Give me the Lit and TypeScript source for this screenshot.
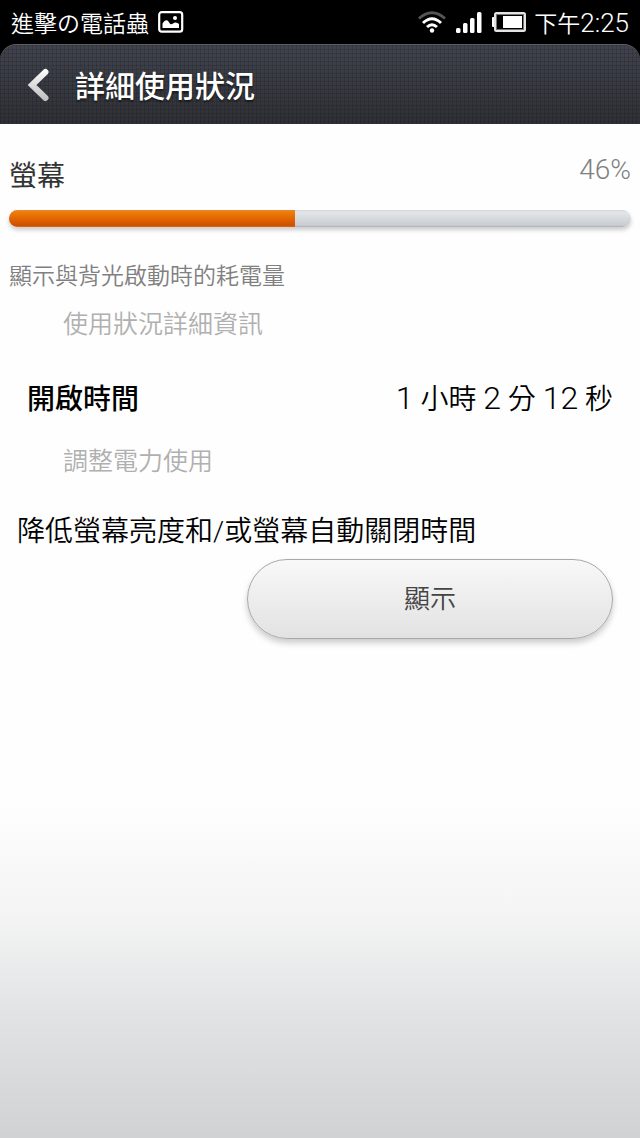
import { LitElement, html, css, svg } from "lit";
import { customElement, property } from "lit/decorators.js";

const pictureIcon = svg`
  <svg class="icon" width="26" height="22" viewBox="0 0 26 22" role="img" aria-label="圖片">
    <rect x="1.200" y="1.200" width="23" height="19.500" rx="2.500" fill="none" stroke="#fff" stroke-width="2.200"/>
    <path d="M4.500 17v-4.500c1.500-2 2.500-3.200 4-3.200 2.300 0 2.700 3.700 4.500 3.900 1.500.2 2.200-1.400 4-1.700 1.500-.2 3 .6 4 1.500V17z" fill="#fff"/>
    <circle cx="17" cy="7" r="2" fill="#fff"/>
  </svg>`;

const wifiIcon = svg`
  <svg class="icon" width="28" height="22" viewBox="0 0 28 22" role="img" aria-label="Wi-Fi">
    <g fill="none" stroke="#fff" stroke-width="3">
      <path d="M1 7.500Q14-4 27 7.500" stroke="#555"/>
      <path d="M5 12Q14 3.500 23 12"/>
      <path d="M9 16Q14 11.500 19 16"/>
    </g>
    <circle cx="14" cy="19.500" r="2.200" fill="#fff"/>
  </svg>`;

const signalIcon = svg`
  <svg class="icon" width="26" height="21" viewBox="0 0 26 21" role="img" aria-label="訊號">
    <g fill="#fff">
      <rect x="0" y="16" width="4.500" height="5" rx="1.500"/>
      <rect x="7" y="11" width="4.500" height="10" rx="1.500"/>
      <rect x="14" y="6" width="4.500" height="15" rx="1.500"/>
      <rect x="21" y="0" width="4.500" height="21" rx="1.500"/>
    </g>
  </svg>`;

const batteryIcon = svg`
  <svg class="icon" width="34" height="20" viewBox="0 0 34 20" role="img" aria-label="電池">
    <rect x="0" y="5" width="3" height="10" rx="1" fill="#fff"/>
    <rect x="3" y="1" width="30" height="18" rx="1.500" fill="none" stroke="#e4e4e4" stroke-width="2"/>
    <rect x="4.500" y="2.500" width="27" height="15" fill="none" stroke="#777" stroke-width="1"/>
    <rect x="11" y="4" width="19" height="12" fill="#fff"/>
  </svg>`;

@customElement("usage-bar")
class UsageBar extends LitElement {
  @property({ type: Number }) value = 0;

  static styles = css`
    :host { display: block; }
    .track {
      height: 17px;
      border-radius: 9px;
      overflow: hidden;
      background: linear-gradient(#d6d8da, #e3e6e9 15%, #c9ccd0 90%, #aaacae);
    }
    .shadow { border-radius: 9px; box-shadow: 0 3px 4px rgba(0, 0, 0, 0.2); }
    .fill { height: 100%; background: linear-gradient(#e08a3c, #f07d05 12%, #cf4e00 92%, #d8702c); }
  `;

  render() {
    return html`
      <div class="shadow">
        <div class="track" role="progressbar" aria-label="螢幕" aria-valuenow=${this.value} aria-valuemin="0" aria-valuemax="100">
          <div class="fill" style="width:${this.value}%"></div>
        </div>
      </div>`;
  }
}

@customElement("app-root")
class AppRoot extends LitElement {
  static styles = css`
    :host {
      display: block;
      background: #000;
      color: #000;
      font-family: Roboto, "Noto Sans CJK TC", sans-serif;
      font-weight: 350;
    }
    * { box-sizing: border-box; }
    .screen { display: flex; flex-direction: column; min-height: 100vh; }
    .status {
      display: flex;
      align-items: center;
      justify-content: space-between;
      height: 44px;
      padding: 0 11px;
      color: #fff;
      font-size: 23px;
    }
    .group { display: flex; align-items: center; gap: 9px; }
    .power { display: flex; align-items: center; gap: 8px; }
    .indicators { display: flex; align-items: center; gap: 10px; }
    .icon { display: block; }
    .clock .num { font-size: 26px; }
    .header {
      display: flex;
      align-items: center;
      height: 80px;
      padding: 0 27px;
      gap: 26px;
      border-top: 1px solid #5a5d62;
      border-radius: 16px 16px 0 0;
      background:
        repeating-linear-gradient(90deg, rgba(0, 0, 0, 0.12) 0 1px, transparent 1px 4px),
        repeating-linear-gradient(rgba(0, 0, 0, 0.12) 0 1px, transparent 1px 4px),
        linear-gradient(#40434c, #2e3035);
    }
    .back { display: block; padding: 0; border: 0; background: none; }
    .title {
      margin: 0;
      padding-top: 4px;
      color: #fff;
      font-size: 30px;
      line-height: 40px;
      font-weight: 500;
      text-shadow: 0 2px 2px rgba(0, 0, 0, 0.5);
    }
    .page {
      flex: 1;
      padding: 28px 9px;
      background: linear-gradient(#fefefe 0 67%, #f4f4f5 78%, #eceded 82%, #e3e4e6 87%, #d9dadc 94%, #d1d2d4);
    }
    .row { display: flex; justify-content: space-between; }
    .name { margin: 0; color: #333; font-size: 28px; line-height: 50px; font-weight: 400; }
    .percent { color: #808080; font-size: 28px; line-height: 36px; font-weight: 300; }
    .bar { margin-top: 8px; }
    .note { margin: 32px 0 0; color: #808080; font-size: 23px; line-height: 36px; }
    .section { margin: 0; padding-left: 54px; color: #b0b0b0; font-size: 25px; line-height: 36px; font-weight: 350; }
    .first { margin-top: 12px; }
    .time { margin: 0; padding: 35px 18px 22px; font-size: 28px; line-height: 44px; }
    .label { font-weight: 500; }
    .value { margin: 0; }
    .value .num { font-size: 32px; line-height: 1; }
    .tip { margin: 0; padding: 30px 8px 0; font-size: 28px; line-height: 44px; }
    .actions { display: grid; grid-template-columns: 229fr 366fr; padding: 5px 18px 0 9px; }
    .show {
      grid-column: 2;
      height: 80px;
      padding: 0;
      border: 1px solid #a8a8a8;
      border-radius: 40px;
      background: linear-gradient(#f8f8f8, #e2e2e2);
      box-shadow: 0 4px 6px rgba(0, 0, 0, 0.2);
      color: #444;
      font: inherit;
      font-size: 26px;
      line-height: 40px;
    }
  `;

  render() {
    return html`
      <div class="screen">
        <div class="status">
          <div class="group"><span>進擊の電話蟲</span>${pictureIcon}</div>
          <div class="power">
            <div class="indicators">${wifiIcon}${signalIcon}${batteryIcon}</div>
            <span class="clock">下午<span class="num">2:25</span></span>
          </div>
        </div>
        <header class="header">
          <button class="back" aria-label="返回">
            <svg class="icon" width="22" height="34" viewBox="0 0 22 34">
              <defs>
                <linearGradient id="steel" gradientUnits="userSpaceOnUse" x1="0" y1="0" x2="0" y2="34">
                  <stop offset="0" stop-color="#fff"/><stop offset="1" stop-color="#bbb"/>
                </linearGradient>
              </defs>
              <path d="M18.500 4L5 17l13.500 13" fill="none" stroke="url(#steel)" stroke-width="6" stroke-linecap="round"/>
            </svg>
          </button>
          <h1 class="title">詳細使用狀況</h1>
        </header>
        <main class="page">
          <div class="row"><h2 class="name">螢幕</h2><span class="percent">46%</span></div>
          <usage-bar class="bar" .value=${46}></usage-bar>
          <p class="note">顯示與背光啟動時的耗電量</p>
          <h3 class="section first">使用狀況詳細資訊</h3>
          <dl class="row time">
            <dt class="label">開啟時間</dt>
            <dd class="value"><span class="num">1</span> 小時 <span class="num">2</span> 分 <span class="num">12</span> 秒</dd>
          </dl>
          <h3 class="section">調整電力使用</h3>
          <p class="tip">降低螢幕亮度和/或螢幕自動關閉時間</p>
          <div class="actions"><button class="show">顯示</button></div>
        </main>
      </div>`;
  }
}
